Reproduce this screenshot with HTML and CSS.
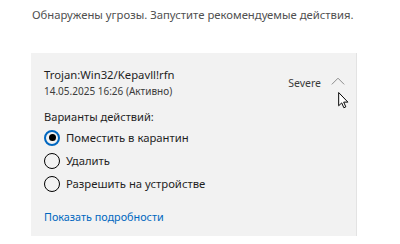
FILE: index.html
```html
<!DOCTYPE html>
<html>
<head lang="ru">
    <meta charset="UTF-8">
    <title></title>
    <link rel="stylesheet" href="styles.css">
</head>
<body>
 <div id="page">
     <p id="intro">Обнаружены угрозы. Запустите рекомендуемые действия.</p>
     <div id="card">
         <div id="head">
             <div id="threat">
                 <div id="name">Trojan:Win32/Kepavll!rfn</div>
                 <div id="date">14.05.2025 16:26 (Активно)</div>
             </div>
             <span id="level">Severe</span>
             <span id="chevron">
                 <svg width="14" height="8" viewBox="0 0 14 8"><path d="M0.8 7.4 L7 1.2 L13.2 7.4" fill="none" stroke="#8c8c8c" stroke-width="1"/></svg>
             </span>
             <svg id="cursor" width="11" height="17" viewBox="0 0 12 19"><path d="M0.6 0.6 L0.6 15.4 L4 12.2 L6.4 17.6 L8.6 16.6 L6.2 11.3 L10.9 11.3 Z" fill="#fff" stroke="#000" stroke-width="1.1" stroke-linejoin="round"/></svg>
         </div>
         <div id="options-title">Варианты действий:</div>
         <ul id="options">
             <li class="on"><span class="radio"></span>Поместить в карантин</li>
             <li><span class="radio"></span>Удалить</li>
             <li><span class="radio"></span>Разрешить на устройстве</li>
         </ul>
         <a id="details" href="#">Показать подробности</a>
     </div>
 </div>
</body>
</html>
```

FILE: styles.css
```css
*{
    margin: 0;
    padding: 0;
}
ul{
    list-style: none;
}
body{
    background-color: #fff;
    font-family: "Noto Sans", "Open Sans", sans-serif;
    color: #1f1f1f;
}
#page{
    padding: 7px 0 0 31px;
}
#intro{
    margin-left: 1px;
    font-size: 11.3px;
    line-height: 16px;
    color: #505050;
    white-space: nowrap;
}
#card{
    width: 312px;
    margin-top: 30px;
    padding: 14px 0 11px 13px;
    background-color: #f2f2f2;
    border-right: 1px solid #e3e3e3;
}
#head{
    display: flex;
    align-items: center;
    position: relative;
}
#threat{
    flex: 1;
}
#name{
    font-size: 11.3px;
    line-height: 16px;
}
#date{
    margin-top: 1px;
    font-size: 10px;
    line-height: 14px;
    color: #3c3c3c;
}
#level{
    font-size: 10.5px;
    color: #3a3a3a;
}
#chevron{
    display: flex;
    margin: -3px 11px 0 10px;
}
#cursor{
    position: absolute;
    right: 7px;
    top: 25px;
}
#options-title{
    margin-top: 11px;
    font-size: 11.1px;
    line-height: 16px;
}
#options{
    margin-top: 1px;
}
#options li{
    display: flex;
    align-items: center;
    height: 23px;
    font-size: 11.3px;
}
.radio{
    width: 16px;
    height: 16px;
    border: 1.6px solid #000;
    border-radius: 50%;
    margin-right: 6px;
    box-sizing: border-box;
    display: flex;
    align-items: center;
    justify-content: center;
}
.on .radio{
    border: 2.5px solid #0067c0;
}
.on .radio:after{
    content: "";
    width: 7px;
    height: 7px;
    border-radius: 50%;
    background-color: #000;
}
#details{
    display: block;
    margin-top: 14px;
    font-size: 10.8px;
    line-height: 16px;
    color: #0067c0;
    text-decoration: none;
}
```
